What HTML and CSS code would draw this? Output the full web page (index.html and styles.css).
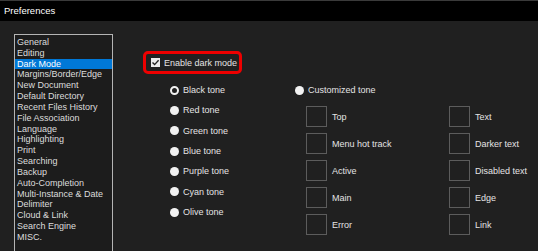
FILE: index.html
```html
<!DOCTYPE html>
<html lang="en">
<head>
    <meta charset="UTF-8">
    <title>Preferences</title>
    <link rel="stylesheet" href="styles.css">
</head>
<body>
    <header class="titlebar">Preferences</header>
    <main class="content">
        <!-- Category list -->
        <ul class="categories">
            <li>General</li>
            <li>Editing</li>
            <li class="selected">Dark Mode</li>
            <li>Margins/Border/Edge</li>
            <li>New Document</li>
            <li>Default Directory</li>
            <li>Recent Files History</li>
            <li>File Association</li>
            <li>Language</li>
            <li>Highlighting</li>
            <li>Print</li>
            <li>Searching</li>
            <li>Backup</li>
            <li>Auto-Completion</li>
            <li>Multi-Instance &amp; Date</li>
            <li>Delimiter</li>
            <li>Cloud &amp; Link</li>
            <li>Search Engine</li>
            <li>MISC.</li>
        </ul>

        <!-- Dark mode page -->
        <section class="panel">
            <label class="enable">
                <span class="checkbox">
                    <svg width="9" height="9" viewBox="0 0 9 9"><path d="M1.5 4.5 L3.6 6.6 L7.6 2.2" fill="none" stroke="#222" stroke-width="1.4"/></svg>
                </span>
                Enable dark mode
            </label>

            <div class="options">
                <div class="tones">
                    <div class="radio-row"><span class="radio checked"></span>Black tone</div>
                    <div class="radio-row"><span class="radio"></span>Red tone</div>
                    <div class="radio-row"><span class="radio"></span>Green tone</div>
                    <div class="radio-row"><span class="radio"></span>Blue tone</div>
                    <div class="radio-row"><span class="radio"></span>Purple tone</div>
                    <div class="radio-row"><span class="radio"></span>Cyan tone</div>
                    <div class="radio-row"><span class="radio"></span>Olive tone</div>
                </div>
                <div class="custom">
                    <div class="radio-row"><span class="radio"></span>Customized tone</div>
                    <div class="swatches">
                        <div class="swatch"><span class="box"></span>Top</div>
                        <div class="swatch"><span class="box"></span>Text</div>
                        <div class="swatch"><span class="box"></span>Menu hot track</div>
                        <div class="swatch"><span class="box"></span>Darker text</div>
                        <div class="swatch"><span class="box"></span>Active</div>
                        <div class="swatch"><span class="box"></span>Disabled text</div>
                        <div class="swatch"><span class="box"></span>Main</div>
                        <div class="swatch"><span class="box"></span>Edge</div>
                        <div class="swatch"><span class="box"></span>Error</div>
                        <div class="swatch"><span class="box"></span>Link</div>
                    </div>
                </div>
            </div>
        </section>
    </main>
</body>
</html>
```

FILE: styles.css
```css
html, body {
    margin: 0;
    padding: 0;
    height: 100%;
    overflow: hidden;
}
body {
    font-family: "Liberation Sans", Arial, sans-serif;
    font-size: 9px;
    background-color: #202020;
    color: #e4e4e4;
}
.titlebar {
    height: 20px;
    line-height: 20px;
    border-top: 1px solid #3a3a3a;
    background-color: #000;
    color: #fff;
    font-size: 9.5px;
    padding-left: 4px;
}
.content {
    display: flex;
    height: calc(100% - 21px);
}
.categories {
    list-style: none;
    margin: 13px 0 0 14px;
    padding: 2px 0 0 0;
    width: 97px;
    border: 1px solid #b4b4b4;
    border-bottom: none;
    background-color: #1c1c1c;
    color: #dcdcdc;
}
.categories li {
    line-height: 10.83px;
    height: 10.83px;
    padding-left: 2px;
    white-space: nowrap;
}
.categories li.selected {
    background-color: #0078d7;
    color: #fff;
}
.panel {
    flex: 1;
    padding-top: 30px;
}
.enable {
    display: flex;
    align-items: center;
    box-sizing: border-box;
    width: 99px;
    height: 23px;
    margin-left: 30px;
    padding-left: 5px;
    border: 3px solid #ee0000;
    border-radius: 5px;
    gap: 4px;
}
.checkbox {
    width: 9px;
    height: 9px;
    background-color: #ececec;
    display: inline-flex;
}
.options {
    display: flex;
    margin-top: 6px;
    margin-left: 57px;
}
.tones {
    width: 125px;
}
.radio-row {
    display: flex;
    align-items: center;
    height: 20.33px;
    gap: 4px;
    white-space: nowrap;
}
.radio {
    box-sizing: border-box;
    width: 9px;
    height: 9px;
    border-radius: 50%;
    background-color: #f2f2f2;
}
.radio.checked {
    background-color: #202020;
    border: 2px solid #f2f2f2;
}
.swatches {
    display: grid;
    grid-template-columns: 143px 80px;
    row-gap: 6px;
    margin-top: 6px;
    margin-left: 11px;
}
.swatch {
    display: flex;
    align-items: center;
    gap: 5px;
    height: 21px;
    white-space: nowrap;
}
.box {
    box-sizing: border-box;
    width: 21px;
    height: 21px;
    border: 1px solid #5c5c5c;
}
```
